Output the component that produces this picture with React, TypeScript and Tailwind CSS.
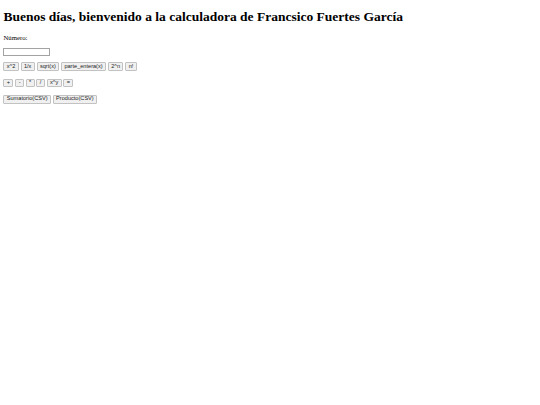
import React from "react";

const Btn = ({ children }: { children: React.ReactNode }) => (
  <button className="h-[8.6px] px-[2.4px] flex items-center justify-center rounded-[1px] border border-[#c2c2c2] bg-[#f0f0f0] text-[5.6px] leading-none text-[#222] font-['Liberation_Sans',sans-serif]">
    {children}
  </button>
);

export default function App() {
  const row1 = ["x^2", "1/x", "sqrt(x)", "parte_entera(x)", "2^n", "n!"];
  const row2 = ["+", "-", "*", "/", "x^y", "="];
  const row3 = ["Sumatorio(CSV)", "Producto(CSV)"];
  return (
    <div className="w-[540px] h-[405px] bg-white pl-[3.4px] font-['Liberation_Serif',serif] text-black">
      <h1 className="pt-[9px] text-[13.5px] leading-[15.5px] font-bold whitespace-nowrap">
        Buenos días, bienvenido a la calculadora de Francsico Fuertes García
      </h1>
      <p className="mt-[9px] text-[6.75px] leading-[7.8px]">Número:</p>
      <input
        type="text"
        className="block mt-[6.7px] w-[46.5px] h-[8.4px] border border-[#a3a3a3] bg-white outline-none"
      />
      <div className="flex gap-[1.8px] mt-[6px]">
        {row1.map((t) => (
          <Btn key={t}>{t}</Btn>
        ))}
      </div>
      <div className="flex gap-[1.8px] mt-[7.7px]">
        {row2.map((t) => (
          <Btn key={t}>{t}</Btn>
        ))}
      </div>
      <div className="flex gap-[1.8px] mt-[7.7px]">
        {row3.map((t) => (
          <Btn key={t}>{t}</Btn>
        ))}
      </div>
    </div>
  );
}
